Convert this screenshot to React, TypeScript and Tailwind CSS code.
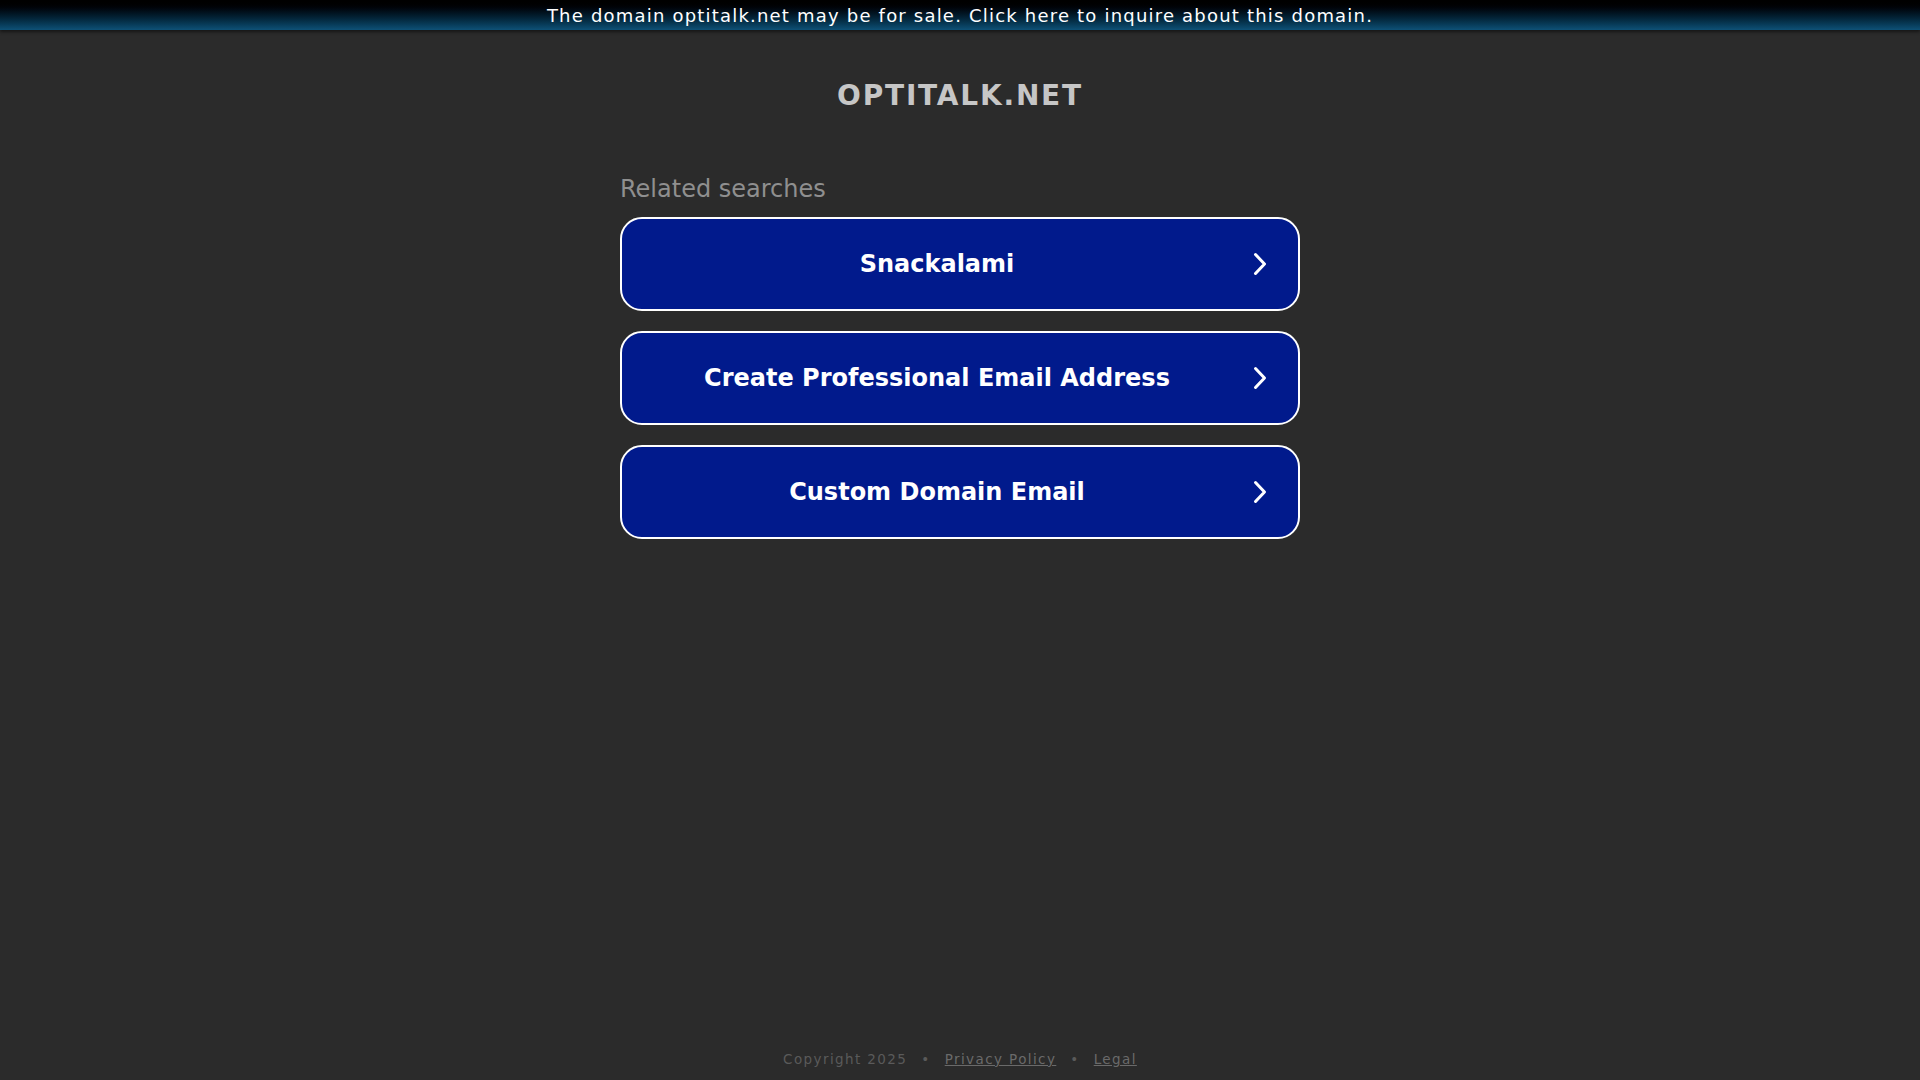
const searches = ["Snackalami", "Create Professional Email Address", "Custom Domain Email"];

export default function App() {
    return (
        <div
            className="min-h-screen flex flex-col bg-[#2b2b2b] text-white"
            style={{ fontFamily: '"DejaVu Sans", Verdana, sans-serif' }}
        >
            {/* for-sale banner */}
            <div className="h-[30px] flex items-center justify-center bg-gradient-to-b from-black to-[#0e5177] shadow-[0_2px_3px_rgba(0,0,0,0.5)] text-[18px] tracking-[1.2px] text-white">
                The domain optitalk.net may be for sale. Click here to inquire about this domain.
            </div>

            <div className="flex-1 flex flex-col items-center">
                <h1 className="mt-[46px] text-[28px] font-bold tracking-[1.8px] text-[#c6c6c6] leading-[40px]">
                    OPTITALK.NET
                </h1>

                <div className="w-[680px] mt-[58px]">
                    <div className="text-[24px] text-[#8f8f8f] leading-[30px] mb-[13px]">Related searches</div>
                    <div className="flex flex-col gap-[20px]">
                        {searches.map((s) => (
                            <a
                                key={s}
                                href="#"
                                className="h-[94px] flex items-center gap-[15px] rounded-[22px] border-2 border-white bg-[#011a8c] pl-[20px] pr-[25px]"
                            >
                                <span className="flex-1 text-center text-[24px] font-bold text-white">{s}</span>
                                <span className="w-[26px] flex justify-center shrink-0">
                                    <svg width="14" height="24" viewBox="0 0 14 24" fill="none">
                                        <path d="M2.5 2.5 L11.5 12 L2.5 21.5" stroke="white" strokeWidth="3" strokeLinecap="round" strokeLinejoin="round" />
                                    </svg>
                                </span>
                            </a>
                        ))}
                    </div>
                </div>
            </div>

            <footer className="h-[42px] flex items-center justify-center gap-[14px] text-[13.5px] tracking-[1.4px] text-[#5a5a5a]">
                <span>Copyright 2025</span>
                <span>•</span>
                <a href="#" className="underline text-[#6a6a6a]">Privacy Policy</a>
                <span>•</span>
                <a href="#" className="underline text-[#6a6a6a]">Legal</a>
            </footer>
        </div>
    );
}
